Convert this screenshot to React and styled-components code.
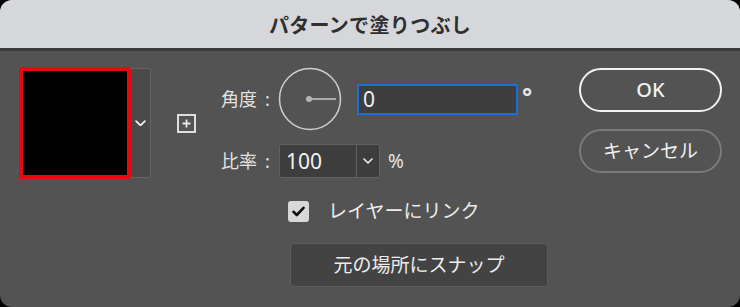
import styled, { createGlobalStyle } from "styled-components"

const GlobalStyle = createGlobalStyle`
    html, body {
        margin: 0;
        padding: 0;
        background: #000;
    }
    body {
        font-family: "Noto Sans", "Noto Sans CJK JP", sans-serif;
    }
`

const Dialog = styled.div`
    width: 740px;
    height: 307px;
    background-color: #535353;
    border-radius: 12px;
    overflow: hidden;
    display: flex;
    flex-direction: column;
    box-sizing: border-box;
`

const TitleBar = styled.div`
    height: 48px;
    flex: none;
    background-color: #d6d7da;
    border-bottom: 3px solid #3a3a3a;
    display: flex;
    align-items: center;
    justify-content: center;
    font-size: 20px;
    font-weight: 700;
    color: #2f2f2f;
    letter-spacing: 0.3px;
`

const Content = styled.div`
    display: flex;
    align-items: flex-start;
    padding: 16px 18px 0 19px;
    line-height: 1;
`

const LeftGroup = styled.div`
    display: flex;
    align-items: center;
    gap: 26px;
`

const SwatchPicker = styled.div`
    display: flex;
    align-items: center;
`

const Swatch = styled.div`
    width: 104px;
    height: 104px;
    background-color: #020202;
    border: 4px solid #e8090e;
    border-radius: 3px;
    position: relative;
    z-index: 1;
`

const SwatchMenu = styled.div`
    width: 20px;
    height: 108px;
    margin-left: -1px;
    background-color: #4a4a4a;
    border: 1px solid #646464;
    border-left: none;
    border-radius: 0 3px 3px 0;
    display: flex;
    align-items: center;
    justify-content: center;
`

const PlusBox = styled.div`
    width: 15px;
    height: 15px;
    border: 2px solid #dedede;
    display: flex;
    align-items: center;
    justify-content: center;
`

const Middle = styled.div`
    margin-left: 25px;
    display: flex;
    flex-direction: column;
`

const Row = styled.div`
    display: flex;
    align-items: center;
    margin-top: ${p => p.$top || 0}px;
    padding-left: ${p => p.$indent || 0}px;
`

const Label = styled.span`
    width: ${p => p.$w}px;
    font-size: 18px;
    color: #e2e2e2;
    white-space: nowrap;
`

const Colon = styled.span`
    margin-left: 8px;
`

const Dial = styled.svg`
    width: 64px;
    height: 64px;
    display: block;
`

const AngleInput = styled.div`
    width: 153px;
    height: 27px;
    margin-left: 15px;
    background-color: #3e3e3e;
    border: 2px solid #1b6fd8;
    display: flex;
    align-items: center;
    padding-left: 4px;
    box-sizing: content-box;
    font-size: 21px;
    color: #f2f2f2;
`

const Unit = styled.span`
    margin-left: ${p => p.$gap}px;
    margin-top: ${p => p.$raise ? -6 : 0}px;
    font-size: ${p => p.$size}px;
    font-weight: ${p => p.$bold ? 700 : 400};
    color: #e6e6e6;
`

const RatioInput = styled.div`
    width: 99px;
    height: 32px;
    background-color: #3d3d3d;
    border: 1px solid #626262;
    border-radius: 3px;
    display: flex;
`

const RatioValue = styled.div`
    width: 70px;
    padding-left: 6px;
    display: flex;
    align-items: center;
    font-size: 21px;
    color: #f2f2f2;
    border-right: 1px solid #626262;
`

const RatioMenu = styled.div`
    flex: 1;
    display: flex;
    align-items: center;
    justify-content: center;
`

const CheckBox = styled.div`
    width: 21px;
    height: 21px;
    background-color: #d8d8d8;
    border-radius: 3px;
    display: flex;
    align-items: center;
    justify-content: center;
`

const CheckLabel = styled.span`
    margin-left: 19px;
    font-size: 19px;
    color: #ececec;
`

const SnapButton = styled.div`
    margin-top: 21px;
    margin-left: 69px;
    width: 256px;
    height: 42px;
    background-color: #434343;
    border: 1.5px solid #5d5d5d;
    border-radius: 4px;
    display: flex;
    align-items: center;
    justify-content: center;
    font-size: 19px;
    color: #ededed;
`

const RightColumn = styled.div`
    margin-left: auto;
    display: flex;
    flex-direction: column;
    gap: 17px;
    padding-top: 1px;
`

const PillButton = styled.div`
    width: 139px;
    height: 40px;
    border: 2px solid ${p => p.$primary ? "#f2f2f2" : "#7b7b7b"};
    border-radius: 22px;
    display: flex;
    align-items: center;
    justify-content: center;
    font-size: ${p => p.$primary ? 20 : 19}px;
    font-weight: ${p => p.$primary ? 500 : 400};
    color: #f0f0f0;
`

const Chevron = ({ size = 11 }) => (
    <svg width={size} height={size * 0.6} viewBox="0 0 10 6">
        <path d="M1 1 L5 5 L9 1" fill="none" stroke="#f0f0f0" strokeWidth="1.6" strokeLinecap="round" strokeLinejoin="round" />
    </svg>
)

const App = () => {
    return (
        <>
            <GlobalStyle />
            <Dialog>
                <TitleBar>パターンで塗りつぶし</TitleBar>
                <Content>
                    <LeftGroup>
                        <SwatchPicker>
                            <Swatch />
                            <SwatchMenu>
                                <Chevron size={11} />
                            </SwatchMenu>
                        </SwatchPicker>
                        <PlusBox>
                            <svg width="9" height="9" viewBox="0 0 9 9">
                                <path d="M4.5 0.5 V8.5 M0.5 4.5 H8.5" stroke="#e6e6e6" strokeWidth="1.8" />
                            </svg>
                        </PlusBox>
                    </LeftGroup>
                    <Middle>
                        <Row>
                            <Label $w={57}>角度<Colon>:</Colon></Label>
                            <Dial viewBox="0 0 64 64">
                                <circle cx="32" cy="32" r="30.5" fill="none" stroke="#cfcfcf" strokeWidth="1.5" />
                                <line x1="31" y1="32" x2="58" y2="32" stroke="#c9c9c9" strokeWidth="1.5" />
                                <circle cx="31" cy="32" r="3" fill="#b5b5b5" />
                            </Dial>
                            <AngleInput>0</AngleInput>
                            <Unit $gap={4} $size={24} $bold $raise>°</Unit>
                        </Row>
                        <Row $top={13}>
                            <Label $w={58}>比率<Colon>:</Colon></Label>
                            <RatioInput>
                                <RatioValue>100</RatioValue>
                                <RatioMenu>
                                    <Chevron size={10} />
                                </RatioMenu>
                            </RatioInput>
                            <Unit $gap={8} $size={19}>%</Unit>
                        </Row>
                        <Row $top={23} $indent={67}>
                            <CheckBox>
                                <svg width="13" height="11" viewBox="0 0 13 11">
                                    <path d="M1.5 5.8 L4.8 9 L11.5 1.8" fill="none" stroke="#111" strokeWidth="2.6" strokeLinecap="round" strokeLinejoin="round" />
                                </svg>
                            </CheckBox>
                            <CheckLabel>レイヤーにリンク</CheckLabel>
                        </Row>
                        <SnapButton>元の場所にスナップ</SnapButton>
                    </Middle>
                    <RightColumn>
                        <PillButton $primary>OK</PillButton>
                        <PillButton>キャンセル</PillButton>
                    </RightColumn>
                </Content>
            </Dialog>
        </>
    )
}

export default App
